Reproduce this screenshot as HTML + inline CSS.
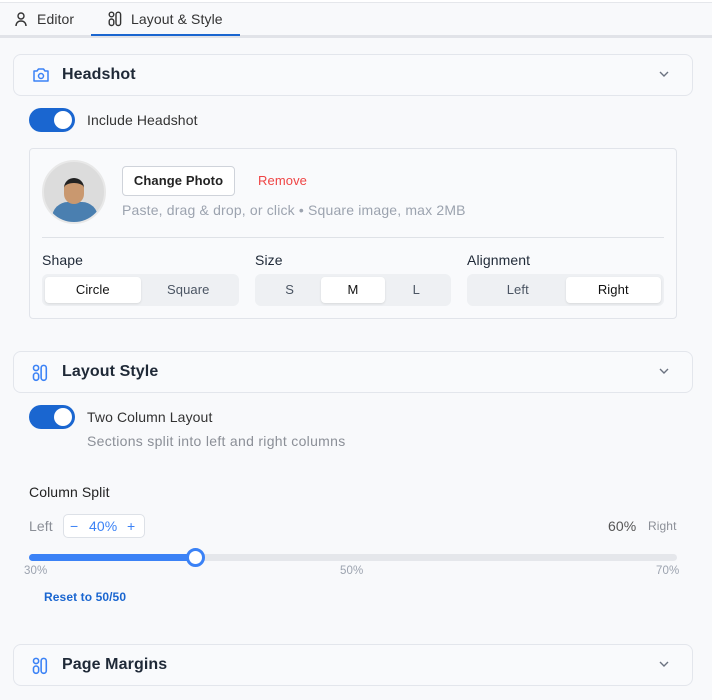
<!DOCTYPE html><html><head><style>
*{box-sizing:border-box;margin:0;padding:0}
body{width:712px;height:700px;overflow:hidden;background:#f8f9fb;font-family:"Liberation Sans",sans-serif;color:#1f2937;position:relative;letter-spacing:0.1px}
.a{position:absolute}
.card{position:absolute;left:13px;width:680px;height:42px;border:1px solid #e3e6ec;border-radius:8px;background:#f9fafc}
.card .t{position:absolute;left:48px;top:11px;font-size:16px;font-weight:bold;color:#1f2937}
.card svg.ic{position:absolute;left:18px;top:12px}
.card .ch{position:absolute;right:22px;top:15px}
.tog{position:absolute;left:29px;width:46px;height:24px;border-radius:12px;background:#1a66d0}
.tog:after{content:"";position:absolute;right:3px;top:3px;width:18px;height:18px;border-radius:50%;background:#fff}
.seg{position:absolute;top:274px;height:32px;background:#eef0f3;border-radius:6px;display:flex;padding:3px}
.seg div{flex:1;text-align:center;font-size:13px;line-height:26px;color:#4b5563;border-radius:4px}
.seg .on{background:#fff;color:#111;box-shadow:0 1px 2px rgba(0,0,0,.1)}
.lbl{position:absolute;top:252px;font-size:14px;color:#1f2937}
</style></head><body>
<div class="a" style="left:0;top:0;width:712px;height:3px;border-bottom:1px solid #e5e7eb;background:#fff"></div>
<div class="a" style="left:0;top:35px;width:712px;height:3px;background:#e1e3e8"></div>
<div class="a" style="left:91px;top:34px;width:149px;height:2px;background:#1a66d0"></div>
<svg class="a" style="left:14px;top:11px" width="14" height="16" viewBox="0 0 14 16" fill="none" stroke="#333" stroke-width="1.4"><circle cx="7" cy="5" r="3"/><path d="M2 15c0-3 2-5 5-5s5 2 5 5"/></svg>
<div class="a" style="left:37px;top:11px;font-size:14px;color:#333">Editor</div>
<svg class="a" style="left:108px;top:11px" width="14" height="16" viewBox="0 0 14 16" fill="none" stroke="#333" stroke-width="1.4"><circle cx="3.5" cy="3.5" r="2.3"/><rect x="1.2" y="8" width="4.6" height="6.5" rx="2.3"/><rect x="8" y="1.2" width="4.6" height="13.3" rx="2.3"/></svg>
<div class="a" style="left:131px;top:11px;font-size:14px;color:#333">Layout &amp; Style</div>

<div class="card" style="top:54px"><svg class="ic" width="18" height="16" viewBox="0 0 18 16" fill="none" stroke="#3b82f6" stroke-width="1.5"><path d="M2 4h3l1.5-2h5L13 4h3v10H2z" stroke-linejoin="round"/><circle cx="9" cy="9" r="2.5"/></svg><div class="t">Headshot</div><svg class="ch" width="12" height="8" viewBox="0 0 12 8" fill="none" stroke="#6b7280" stroke-width="1.4"><path d="M2 2l4 4 4-4"/></svg></div>
<div class="tog" style="top:108px"></div>
<div class="a" style="left:87px;top:112px;font-size:14px;color:#333">Include Headshot</div>

<div class="a" style="left:29px;top:148px;width:648px;height:171px;border:1px solid #e1e4ea;border-radius:4px;background:#f9fafc"></div>
<div class="a" style="left:42px;top:160px;width:64px;height:64px;border-radius:50%;overflow:hidden;background:#dcdcdc;border:2px solid #e8e8e8">
<div class="a" style="left:8px;top:40px;width:46px;height:30px;border-radius:16px 16px 0 0;background:#4a7fb0"></div>
<div class="a" style="left:20px;top:16px;width:20px;height:26px;border-radius:10px;background:#c9986f;border-top:5px solid #222"></div>
</div>
<div class="a" style="left:122px;top:166px;width:113px;height:30px;border:1px solid #cfd3da;border-radius:4px;background:#fff;font-size:13px;font-weight:bold;text-align:center;line-height:28px;color:#222">Change Photo</div>
<div class="a" style="left:258px;top:173px;font-size:13px;color:#ef4444">Remove</div>
<div class="a" style="left:122px;top:202px;font-size:14px;color:#9ca3af;letter-spacing:0.17px">Paste, drag &amp; drop, or click • Square image, max 2MB</div>
<div class="a" style="left:42px;top:237px;width:622px;height:1px;background:#dfe2e7"></div>
<div class="lbl" style="left:42px">Shape</div><div class="lbl" style="left:255px">Size</div><div class="lbl" style="left:467px">Alignment</div>
<div class="seg" style="left:42px;width:197px"><div class="on">Circle</div><div>Square</div></div>
<div class="seg" style="left:255px;width:196px"><div>S</div><div class="on">M</div><div>L</div></div>
<div class="seg" style="left:467px;width:197px"><div>Left</div><div class="on">Right</div></div>

<div class="card" style="top:351px"><svg class="ic" width="16" height="18" viewBox="0 0 14 16" fill="none" stroke="#3b82f6" stroke-width="1.4"><circle cx="3.5" cy="3.5" r="2.3"/><rect x="1.2" y="8" width="4.6" height="6.5" rx="2.3"/><rect x="8" y="1.2" width="4.6" height="13.3" rx="2.3"/></svg><div class="t">Layout Style</div><svg class="ch" width="12" height="8" viewBox="0 0 12 8" fill="none" stroke="#6b7280" stroke-width="1.4"><path d="M2 2l4 4 4-4"/></svg></div>
<div class="tog" style="top:405px"></div>
<div class="a" style="left:87px;top:409px;font-size:14px;color:#333">Two Column Layout</div>
<div class="a" style="left:87px;top:433px;font-size:14px;color:#8b8f97;letter-spacing:0.3px">Sections split into left and right columns</div>
<div class="a" style="left:29px;top:484px;font-size:14px;color:#222">Column Split</div>
<div class="a" style="left:29px;top:518px;font-size:14px;color:#8b8f97">Left</div>
<div class="a" style="left:63px;top:514px;width:82px;height:24px;border:1px solid #dde1e7;border-radius:5px;background:#fff;font-size:14px;color:#3b82f6;line-height:22px"><span style="position:absolute;left:6px">−</span><span style="position:absolute;left:25px">40%</span><span style="position:absolute;left:63px">+</span></div>
<div class="a" style="left:608px;top:518px;font-size:14px;color:#555">60%</div>
<div class="a" style="left:648px;top:519px;font-size:12px;color:#8b8f97">Right</div>
<div class="a" style="left:29px;top:554px;width:648px;height:7px;border-radius:4px;background:#e5e7eb"></div>
<div class="a" style="left:29px;top:554px;width:166px;height:7px;border-radius:4px;background:#3b82f6"></div>
<div class="a" style="left:186px;top:548px;width:19px;height:19px;border-radius:50%;background:#fff;border:3px solid #3b82f6"></div>
<div class="a" style="left:24px;top:565px;font-size:11.5px;color:#9ca3af">30%</div>
<div class="a" style="left:340px;top:565px;font-size:11.5px;color:#9ca3af">50%</div>
<div class="a" style="left:656px;top:565px;font-size:11.5px;color:#9ca3af">70%</div>
<div class="a" style="left:44px;top:590px;font-size:12px;font-weight:bold;color:#1a66d0">Reset to 50/50</div>

<div class="card" style="top:644px"><svg class="ic" width="16" height="18" viewBox="0 0 14 16" fill="none" stroke="#3b82f6" stroke-width="1.4"><circle cx="3.5" cy="3.5" r="2.3"/><rect x="1.2" y="8" width="4.6" height="6.5" rx="2.3"/><rect x="8" y="1.2" width="4.6" height="13.3" rx="2.3"/></svg><div class="t">Page Margins</div><svg class="ch" width="12" height="8" viewBox="0 0 12 8" fill="none" stroke="#6b7280" stroke-width="1.4"><path d="M2 2l4 4 4-4"/></svg></div>
</body></html>
